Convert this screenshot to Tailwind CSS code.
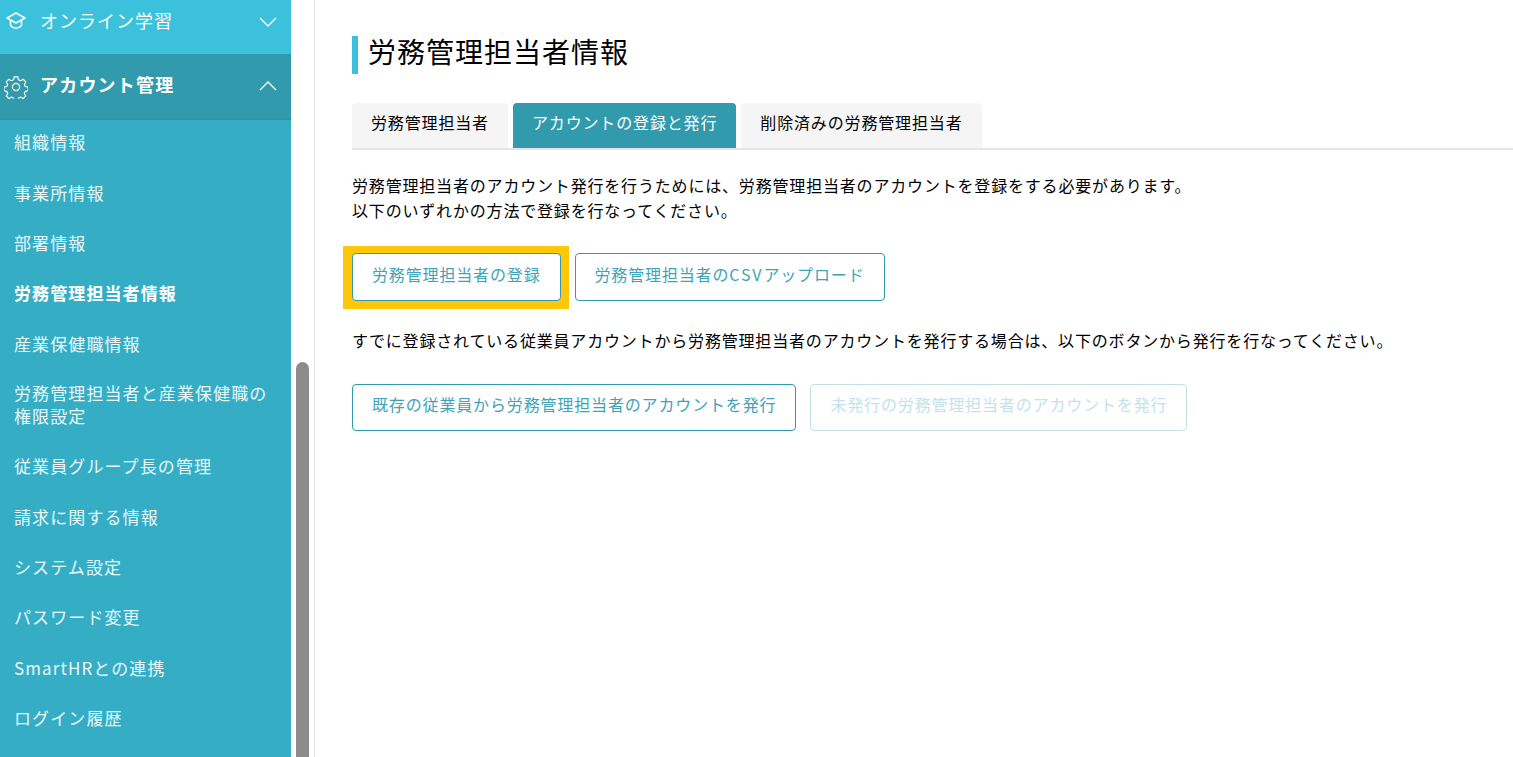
<!DOCTYPE html>
<html lang="ja">
<head>
    <meta charset="UTF-8">
    <title>労務管理担当者情報</title>
    <script src="https://cdn.jsdelivr.net/npm/@tailwindcss/browser@4"></script>
</head>
<body class="bg-white h-[757px] overflow-hidden font-['Noto_Sans_CJK_JP',sans-serif] text-black">
<div class="flex h-[757px] overflow-hidden">
    <!-- サイドバー -->
    <aside class="w-[291px] shrink-0 h-full overflow-hidden bg-[#35aec5] text-white">
        <div class="h-[54px] bg-[#3cc1dc] flex items-center pl-[6px] pr-[14px]">
            <svg class="w-[20px] h-[18px] shrink-0 mb-[12px]" viewBox="0 0 20 18" fill="none" stroke="currentColor" stroke-width="1.500" stroke-linejoin="round"><path d="M10 1 1 6l9 5 9-5z"/><path d="M4.500 8.500V13c1.500 4 9.500 4 11 0V8.500"/></svg>
            <span class="ml-[14px] mb-[14px] text-[18px] tracking-[1px] leading-none">オンライン学習</span>
            <svg class="ml-auto mb-[10px] w-[18px] h-[10px]" viewBox="0 0 18 10" fill="none" stroke="currentColor" stroke-width="1.300"><path d="M1 1l8 8 8-8"/></svg>
        </div>
        <div class="h-[66px] bg-[#329aad] flex items-center pl-[4px] pr-[14px] border-b border-[#2f93a6]">
            <svg class="w-[24px] h-[24px] shrink-0" viewBox="0 0 24 24" fill="none" stroke="currentColor" stroke-width="1.200" stroke-linejoin="round"><circle cx="12" cy="12" r="3.600"/><path d="M10 1.500h4l.6 3 2.200 1 2.600-1.600 2.800 2.800-1.600 2.600 1 2.200 2.900.6v3.800l-2.900.6-1 2.200 1.600 2.600-2.800 2.800-2.600-1.600-2.200 1-.6 2.900h-4l-.6-2.900-2.200-1-2.600 1.600-2.800-2.800 1.600-2.600-1-2.200-2.900-.6v-3.800l2.900-.6 1-2.200-1.600-2.600 2.800-2.800 2.600 1.600 2.200-1z" transform="translate(.5 .5) scale(.96)"/></svg>
            <span class="ml-[12px] mb-[5px] text-[18px] font-bold tracking-[1.200px] leading-none">アカウント管理</span>
            <svg class="ml-auto mb-[2px] w-[18px] h-[10px]" viewBox="0 0 18 10" fill="none" stroke="currentColor" stroke-width="1.300"><path d="M1 9l8-8 8 8"/></svg>
        </div>
        <nav class="-mt-[3.500px] px-[14px] text-[17px] tracking-[1.100px] leading-[23px] text-[#e8f7fa]">
            <div class="h-[50.400px] flex items-center">組織情報</div>
            <div class="h-[50.400px] flex items-center">事業所情報</div>
            <div class="h-[50.400px] flex items-center">部署情報</div>
            <div class="h-[50.400px] flex items-center font-bold text-white">労務管理担当者情報</div>
            <div class="h-[50.400px] flex items-center">産業保健職情報</div>
            <div class="h-[72px] flex items-center">労務管理担当者と産業保健職の<br>権限設定</div>
            <div class="h-[50.400px] flex items-center">従業員グループ長の管理</div>
            <div class="h-[50.400px] flex items-center">請求に関する情報</div>
            <div class="h-[50.400px] flex items-center">システム設定</div>
            <div class="h-[50.400px] flex items-center">パスワード変更</div>
            <div class="h-[50.400px] flex items-center">SmartHRとの連携</div>
            <div class="h-[50.400px] flex items-center">ログイン履歴</div>
        </nav>
    </aside>

    <!-- スクロールバー -->
    <div class="w-[24px] shrink-0 h-full border-r border-[#e6e6e6] pl-[5px] pt-[362px]">
        <div class="w-[13px] h-[395px] rounded-t-full bg-[#8c8c8c]"></div>
    </div>

    <!-- メイン -->
    <main class="flex-1 min-w-0 pl-[37px] pt-[36px]">
        <h1 class="h-[38px] border-l-[6px] border-[#3cc1dc] pl-[10px] text-[28px] leading-[30px] tracking-[1px]">労務管理担当者情報</h1>

        <div class="mt-[29px] flex gap-[5px] border-b-2 border-[#e6e6e6] h-[47px] text-[16px] tracking-[.85px]">
            <div class="h-[45px] px-[19px] pb-[8px] flex items-center bg-[#f5f5f5] rounded-t-[4px]">労務管理担当者</div>
            <div class="h-[45px] px-[19px] pb-[8px] flex items-center bg-[#329aad] text-white rounded-t-[4px]">アカウントの登録と発行</div>
            <div class="h-[45px] px-[19px] pb-[8px] flex items-center bg-[#f5f5f5] rounded-t-[4px]">削除済みの労務管理担当者</div>
        </div>

        <p class="mt-[23px] text-[16px] leading-[25px] tracking-[.82px]">労務管理担当者のアカウント発行を行うためには、労務管理担当者のアカウントを登録をする必要があります。<br>以下のいずれかの方法で登録を行なってください。</p>

        <div class="mt-[30px] flex gap-[14px] text-[16px] tracking-[.85px] text-[#3ea3b6]">
            <div class="-my-[7px] mb-[-8px] -ml-[9px] -mr-[8px] pt-[7px] pb-[8px] pl-[9px] pr-[8px] bg-[#ffc60a]">
                <button class="h-[48px] px-[19px] pb-[7px] border border-[#329aad] rounded-[4px] bg-white">労務管理担当者の登録</button>
            </div>
            <button class="h-[48px] px-[19px] pb-[7px] border border-[#329aad] rounded-[4px] bg-white">労務管理担当者の<span class="tracking-[1.850px]">CSV</span>アップロード</button>
        </div>

        <p class="mt-[27px] text-[16px] leading-[25px] tracking-[.82px]">すでに登録されている従業員アカウントから労務管理担当者のアカウントを発行する場合は、以下のボタンから発行を行なってください。</p>

        <div class="mt-[31px] flex gap-[14px] text-[16px] tracking-[.85px] text-[#3ea3b6]">
            <button class="h-[47px] px-[19px] pb-[8px] border border-[#329aad] rounded-[4px] bg-white">既存の従業員から労務管理担当者のアカウントを発行</button>
            <button class="h-[47px] px-[19px] pb-[8px] border border-[#c2e1e7] rounded-[4px] bg-white text-[#c2e3e9]">未発行の労務管理担当者のアカウントを発行</button>
        </div>
    </main>
</div>
</body>
</html>
